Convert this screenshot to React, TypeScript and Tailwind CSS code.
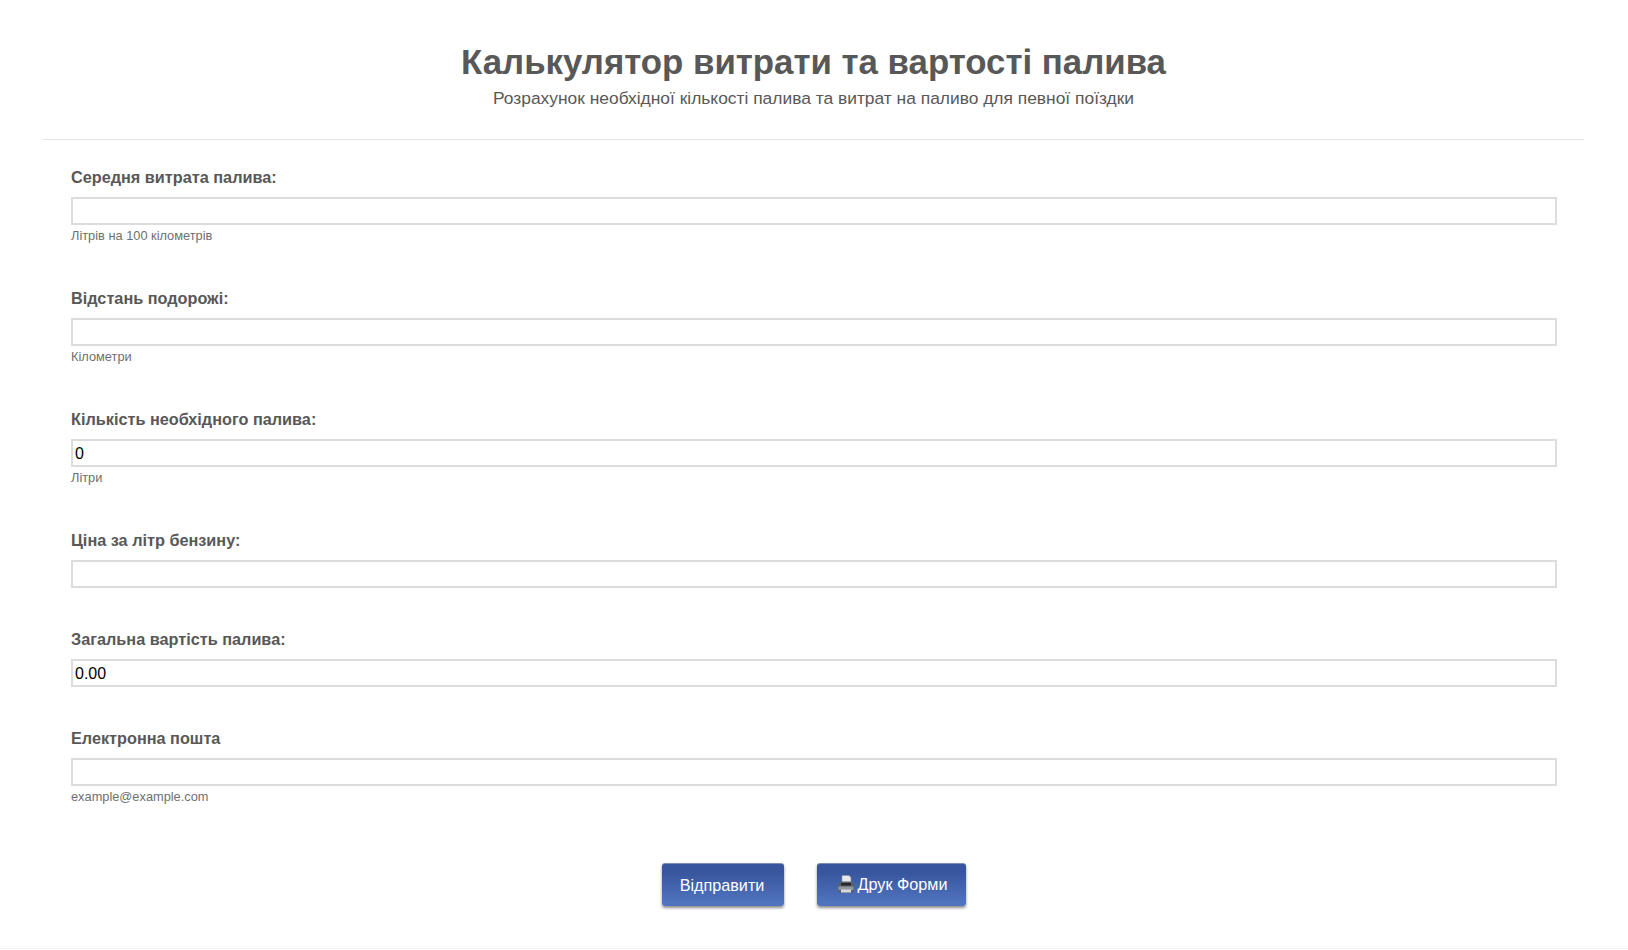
const fields = [
  { label: "Середня витрата палива:", value: "", hint: "Літрів на 100 кілометрів" },
  { label: "Відстань подорожі:", value: "", hint: "Кілометри" },
  { label: "Кількість необхідного палива:", value: "0", hint: "Літри" },
  { label: "Ціна за літр бензину:", value: "" },
  { label: "Загальна вартість палива:", value: "0.00" },
  { label: "Електронна пошта", value: "", hint: "example@example.com" },
];

const PrinterIcon = () => (
  <svg width="20" height="20" viewBox="0 0 20 20" className="shrink-0">
    <path d="M6 1.500h7l2 2V10H6z" fill="#e6e8ec" stroke="#8a8f98" strokeWidth="0.6" />
    <path d="M2 10.500 4.500 7.500h11l2.500 3V17a1.500 1.500 0 0 1-1.500 1.500h-13A1.500 1.500 0 0 1 2 17z" fill="#5b5f66" />
    <rect x="5" y="9" width="10" height="2.500" fill="#24272c" />
    <rect x="2.500" y="12.500" width="15" height="3.500" fill="#92969d" />
    <rect x="5" y="15.500" width="10" height="3" fill="#d5d8dc" />
  </svg>
);

const btnClass =
  "h-[43px] flex items-center justify-center gap-[2px] rounded-[3px] border-t border-[#7d8db5] bg-gradient-to-b from-[#37569d] from-20% to-[#5073be] to-90% text-white text-[16.2px] shadow-[0_2px_3px_rgba(0,0,0,0.45)]";

export default function App() {
  return (
    <div
      className="h-[950px] bg-white text-[#585858] overflow-hidden"
      style={{ fontFamily: '"Liberation Sans", Arial, sans-serif' }}
    >
      <div className="px-[43px]">
        <header className="pt-[40px] h-[140px] mr-[1px] border-b border-[#e6e6e6] text-center">
          <h1 className="text-[34.8px] leading-[44px] font-bold">Калькулятор витрати та вартості палива</h1>
          <p className="text-[17.4px] leading-[24px] mt-[2px]">
            Розрахунок необхідної кількості палива та витрат на паливо для певної поїздки
          </p>
        </header>

        <form className="px-[28px] pt-[27px]">
          {fields.map((f) => (
            <div key={f.label} className={f.hint ? "h-[121px]" : "h-[99px]"}>
              <label className="block text-[16.25px] leading-[20px] font-bold mb-[10px]">{f.label}</label>
              <input
                readOnly
                value={f.value}
                className="block w-full h-[28px] pl-[2px] pr-[3px] pt-[2px] border-2 border-[#dcdcdc] text-[16px] text-black bg-white outline-none"
              />
              {f.hint && <div className="text-[12.8px] leading-[16px] mt-[3px] text-[#6f6f6f]">{f.hint}</div>}
            </div>
          ))}

          <div className="flex justify-center gap-[33px] mt-[14px]">
            <button type="button" className={`${btnClass} w-[122px] pr-[2px]`}>
              Відправити
            </button>
            <button type="button" className={`${btnClass} w-[149px] pb-[2px]`}>
              <PrinterIcon />
              Друк Форми
            </button>
          </div>
        </form>
      </div>
      <div className="mt-[42px] border-t border-[#f2f2f2]" />
    </div>
  );
}
